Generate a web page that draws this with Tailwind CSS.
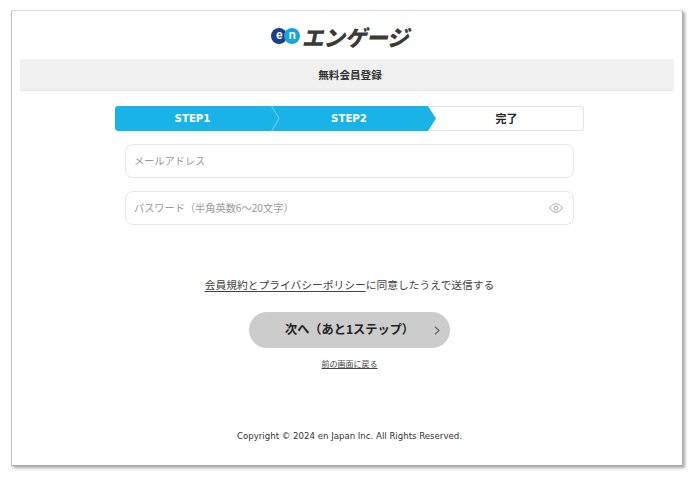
<!DOCTYPE html>
<html lang="ja">
<head>
<meta charset="utf-8">
<script src="https://cdn.jsdelivr.net/npm/@tailwindcss/browser@4"></script>
</head>
<body class="bg-white w-[697px] h-[480px] overflow-hidden font-['Noto_Sans_CJK_JP','Noto_Sans',sans-serif]">
<div class="ml-[11px] mt-[10px] w-[672px] h-[456px] bg-white border border-[#dcdcdc] border-l-[#c4c4c4] border-r-[#b0b0b0] border-b-[#a8a8a8] shadow-[2px_2px_3px_rgba(0,0,0,0.35)] flex flex-col items-center">
  <div class="h-[48px] flex items-center justify-center gap-[4px] pt-[2px] mr-[12px]">
    <div class="flex">
      <div class="w-[16px] h-[16px] rounded-full bg-[#1c3f86] text-white text-[12px] leading-[15px] font-bold text-center font-['Liberation_Sans']">e</div>
      <div class="w-[16px] h-[16px] -ml-[3px] rounded-full bg-[#19a5dc] text-white text-[12px] leading-[15px] font-bold text-center font-['Liberation_Sans']">n</div>
    </div>
    <div class="text-[22px] leading-[24px] font-black text-[#3c3a36] -skew-x-12 tracking-[-0.6px]">エンゲージ</div>
  </div>
  <div class="w-[654px] h-[32px] bg-[#f1f1f1] border-b border-[#e8e8e8] flex items-center justify-center text-[10.6px] font-bold text-[#333] pl-[6px]">無料会員登録</div>
  <div class="mt-[15px] ml-[5px] w-[469px] h-[25px] flex">
    <div class="relative w-[157px] bg-[#1ab3e8] rounded-l-[3px] flex items-center justify-center text-white text-[10.2px] font-bold font-['DejaVu_Sans'] pt-[1px] pr-[2px]">
      STEP1
      <svg class="absolute right-[-8px] top-0 z-10" width="9" height="25" viewBox="0 0 9 25"><path d="M0.5 0 L8 12.5 L0.5 25" fill="none" stroke="#7fd3f1" stroke-width="1"/></svg>
    </div>
    <div class="relative w-[156px] bg-[#1ab3e8] flex items-center justify-center text-white text-[10.2px] font-bold font-['DejaVu_Sans'] pt-[1px] pr-[2px]">
      STEP2
      <svg class="absolute right-[-8px] top-0" width="8" height="25" viewBox="0 0 8 25"><path d="M0 0 L8 12.5 L0 25 Z" fill="#1ab3e8"/></svg>
    </div>
    <div class="flex-1 border border-l-0 border-[#e6e6e6] rounded-r-[3px] flex items-center justify-center text-[11px] font-bold text-[#222] pl-[2px] pb-[1px]">完了</div>
  </div>
  <div class="mt-[13px] ml-[5px] w-[449px] h-[34px] border border-[#e6e6e6] rounded-[8px] flex items-center px-[8px] text-[10.2px] text-[#9a9a9a]">メールアドレス</div>
  <div class="mt-[13px] ml-[5px] w-[449px] h-[34px] border border-[#e6e6e6] rounded-[8px] flex items-center justify-between pl-[8px] pr-[10px] text-[10.2px] text-[#9a9a9a]">
    <span>パスワード（半角英数6～20文字）</span>
    <svg width="14" height="10" viewBox="0 0 14 10" fill="none" stroke="#a6a6a6" stroke-width="1"><path d="M0.8 5 C3 1.6 5 0.8 7 0.8 C9 0.8 11 1.6 13.2 5 C11 8.4 9 9.2 7 9.2 C5 9.2 3 8.4 0.8 5 Z"/><circle cx="7" cy="5" r="2"/></svg>
  </div>
  <div class="mt-[50px] ml-[5px] h-[20px] flex items-center text-[10.75px] text-[#444]">
    <span class="underline underline-offset-2">会員規約とプライバシーポリシー</span><span>に同意したうえで送信する</span>
  </div>
  <div class="mt-[17px] ml-[5px] relative w-[201px] h-[36px] rounded-full bg-[#cccccc] flex items-center justify-center text-[12.2px] font-bold text-[#222] pb-[2px]">
    次へ（あと1ステップ）
    <svg class="absolute right-[10px] top-[14px]" width="6" height="9" viewBox="0 0 6 9" fill="none" stroke="#666" stroke-width="1.2"><path d="M1 0.8 L5 4.5 L1 8.2"/></svg>
  </div>
  <div class="mt-[9px] ml-[5px] h-[14px] flex items-center text-[8px] text-[#444] underline underline-offset-1">前の画面に戻る</div>
  <div class="mt-[58px] ml-[5px] text-[8.6px] leading-[14px] text-[#333] font-['DejaVu_Sans']">Copyright © 2024 en Japan Inc. All Rights Reserved.</div>
</div>
</body>
</html>
